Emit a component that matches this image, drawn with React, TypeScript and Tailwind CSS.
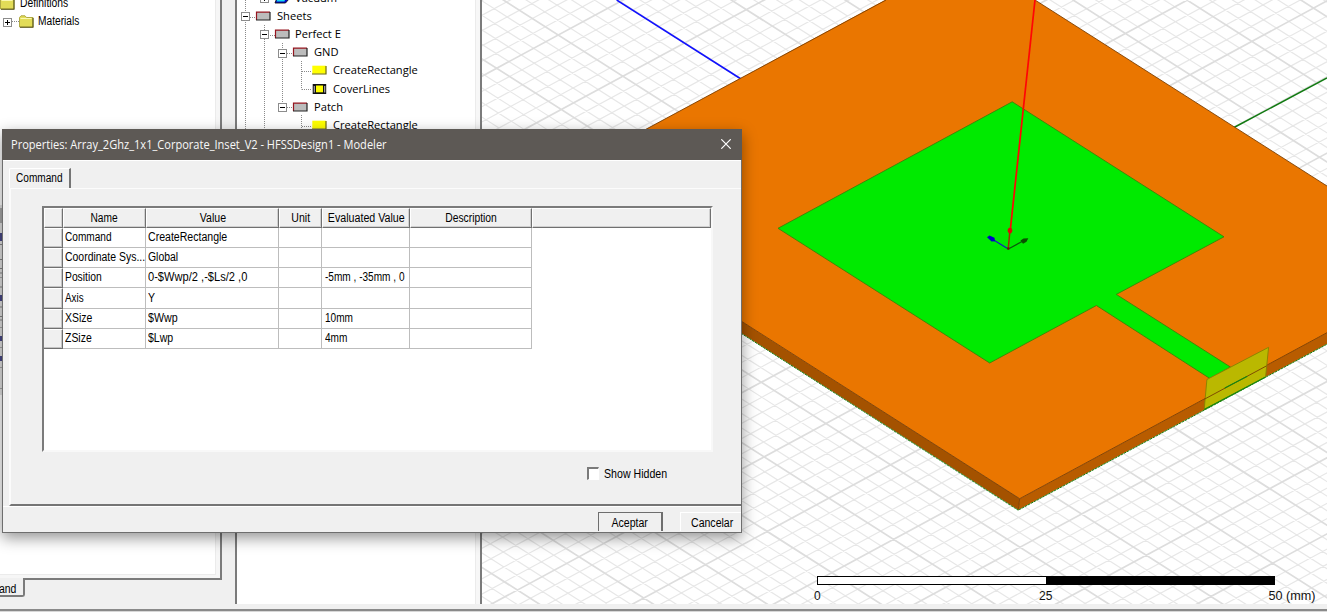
import React from "react";

const U = [64.67, 41.24];
const V = [61.7, -33.3];
const ORIGIN = [558.3, 35];

function gridLine(k: number, dir: number[], step: number[]) {
  const x = ORIGIN[0] + (step[0] * k) / 5;
  const y = ORIGIN[1] + (step[1] * k) / 5;
  return `M${(x - dir[0] * 30).toFixed(2)} ${(y - dir[1] * 30).toFixed(2)}L${(x + dir[0] * 30).toFixed(2)} ${(y + dir[1] * 30).toFixed(2)}`;
}

const indices = Array.from({ length: 221 }, (_, i) => i - 110);
const paths = (major: boolean) =>
  indices
    .filter((k) => (k % 5 === 0) === major)
    .map((k) => gridLine(k, U, V) + gridLine(k, V, U))
    .join("");

function Viewport() {
  return (
    <svg className="block h-[604px] w-[845px] shrink-0 bg-white" viewBox="482 0 845 604">
      <path d={paths(false)} stroke="#e7e7e7" strokeWidth="1.2" fill="none" />
      <path d={paths(true)} stroke="#dddddd" strokeWidth="1.7" fill="none" />
      <path d="M616.7 0L741 79" stroke="#1010ff" strokeWidth="1.5" />
      <path d="M1327 78L1234 127.5" stroke="#107a10" strokeWidth="1.5" />
      <path d="M885 0L1035 0L1327 186V333L1019.7 498.7L741 321L600 231V154Z" fill="#ea7600" />
      <path d="M741 321L1019.7 498.7L1018.2 510L741 333Z" fill="#a45200" />
      <path d="M1019.7 498.7L1327 332.7V344L1018.2 510Z" fill="#b85c00" />
      <path d="M600 154L886 0M1035 0L1327 186M741 321L1019.7 498.7L1327 332.7M1019.7 498.7L1018.2 510" fill="none" stroke="#7c3e00" strokeWidth="0.9" />
      <path d="M741 333.2L1018.2 510.2L1327 344.2" fill="none" stroke="#128012" strokeWidth="1" strokeDasharray="2.5 0.8" />
      <path
        d="M778 228.3L1012.2 101.8L1224 236.8L1116.3 294.4L1230.4 367L1209.9 378.5L1096.4 305.5L989.7 363Z"
        fill="#00ea00"
        stroke="#3c8208"
        strokeWidth="0.9"
      />
      <path d="M1206.9 379.5L1268.6 347.3L1265.6 376.9L1204.2 409.5Z" fill="#bab800" stroke="#858200" strokeWidth="0.9" />
      <path d="M1204.2 399.3L1266.5 365.9" stroke="#804c00" strokeWidth="1" />
      <path d="M1224.8 388.1L1247.3 376.2M1204.2 409.5L1265.6 376.9" stroke="#128a12" strokeWidth="1.1" />
      <path d="M1035 0L1010.2 231" stroke="#ff0505" strokeWidth="1.7" />
      <path d="M1010 230L1008.3 248" stroke="#a03000" strokeWidth="1.5" />
      <path d="M1008.3 249L992 239" stroke="#1020c0" strokeWidth="1.3" />
      <path d="M1008.3 249L1023 241" stroke="#0a5a0a" strokeWidth="1.3" />
      <path d="M987 237.3L989.5 235.6L994.5 237.8L995 241.3L991.5 241.5Z" fill="#0000c8" />
      <path d="M1028.3 238.3L1026.5 241.8L1023 243.8L1020.5 240.5L1023.5 238.6Z" fill="#0a5000" />
      <ellipse cx="1010" cy="230.6" rx="2.3" ry="2.8" fill="#e00808" />
      <circle cx="1008.3" cy="248.6" r="1.3" fill="#701800" />
      <rect x="817.5" y="576.5" width="457" height="8" fill="#fff" stroke="#000" />
      <rect x="1046" y="576" width="229" height="9" fill="#000" />
      <g fontFamily="'Liberation Sans', Arial, sans-serif" fontSize="12" fill="#111">
        <text x="814" y="600">0</text>
        <text x="1039" y="600">25</text>
        <text x="1268.5" y="600" textLength="47" lengthAdjust="spacingAndGlyphs">50 (mm)</text>
      </g>
    </svg>
  );
}

function Expander({ plus = false }: { plus?: boolean }) {
  return (
    <svg className="h-[9px] w-[9px] shrink-0" viewBox="0 0 9 9">
      <rect x="0.5" y="0.5" width="8" height="8" fill="#fff" stroke="#8c8c8c" />
      <path d={plus ? "M2 4.5H7M4.5 2V7" : "M2 4.5H7"} stroke="#000" />
    </svg>
  );
}

function NodeIcon({ kind }: { kind: string }) {
  return (
    <svg className="h-[10px] w-[15px] shrink-0 overflow-visible" viewBox="0 0 15 10">
      {kind === "sheet" && (
        <>
          <rect x="0.5" y="1" width="13.5" height="8" fill="#bcbcbc" />
          <path d="M0.5 9V1.2H14" fill="none" stroke="#96141e" strokeWidth="1.2" />
          <path d="M14 1V9H0" fill="none" stroke="#222" strokeWidth="1.2" />
        </>
      )}
      {kind === "rect" && (
        <>
          <rect x="0.3" y="0.7" width="13.5" height="8" fill="#ffff00" />
          <path d="M14 1V9H0" fill="none" stroke="#6e6a00" strokeWidth="1.2" />
        </>
      )}
      {kind === "cover" && (
        <>
          <rect x="0.7" y="0" width="13.5" height="10" fill="#111" />
          <path d="M2.3 2V8.5M12.7 2V8.5" stroke="#aaa" strokeWidth="1.2" />
          <rect x="4" y="1.5" width="7" height="6.8" fill="#ffff00" />
        </>
      )}
      {kind === "solid" && (
        <>
          <path d="M0 10L4 0H14V6L10.5 10Z" fill="#0000c8" stroke="#111" strokeWidth="0.9" />
          <path d="M1.5 8.6L4.5 0H12L9.5 8.6Z" fill="#18d8f4" />
        </>
      )}
    </svg>
  );
}

function TreeRow({ pad, kind, label, leaf = false, plus = false }: { pad: string; kind: string; label: string; leaf?: boolean; plus?: boolean }) {
  return (
    <div className={`flex h-[18.2px] items-center ${pad}`}>
      {leaf ? <span className="w-[9px] shrink-0" /> : <span className="mt-[2px] flex"><Expander plus={plus} /></span>}
      <span className="ml-[6px] flex"><NodeIcon kind={kind} /></span>
      <span className="ml-[5.5px] origin-left scale-x-[0.96] whitespace-nowrap">{label}</span>
    </div>
  );
}

function ModelTree() {
  return (
    <div className="relative h-[604px] w-[238px] overflow-hidden bg-white">
      <svg className="absolute left-0 top-0 h-[130px] w-[120px]" viewBox="237 0 120 130">
        <path
          d="M245.5 0V130M264.5 25V130M282.5 43V107M301.5 61V89.5M301.5 115V130M264.5 0V2M250 17.5H256M268 35.5H275M287 53.5H293M302 71.5H312M302 89.5H312M287 107.5H293M302 126.5H312"
          fill="none"
          stroke="#8a8a8a"
          strokeDasharray="1 1"
        />
      </svg>
      <div className="relative mt-[-11.5px] font-['Open_Sans','Noto_Sans',sans-serif] text-[11.6px] leading-[18px] text-black">
        <TreeRow pad="pl-[22.7px]" kind="solid" label="Vacuum" plus />
        <TreeRow pad="pl-[4px]" kind="sheet" label="Sheets" />
        <TreeRow pad="pl-[22.7px]" kind="sheet" label="Perfect E" />
        <TreeRow pad="pl-[41.4px]" kind="sheet" label="GND" />
        <TreeRow pad="pl-[60px]" kind="rect" label="CreateRectangle" leaf />
        <TreeRow pad="pl-[60px]" kind="cover" label="CoverLines" leaf />
        <TreeRow pad="pl-[41.4px]" kind="sheet" label="Patch" />
        <TreeRow pad="pl-[60px]" kind="rect" label="CreateRectangle" leaf />
      </div>
    </div>
  );
}

function Folder() {
  return (
    <svg className="h-[13px] w-[15px] shrink-0" viewBox="0 0 15 13">
      <path d="M0.5 2.5L2 0.8H6L7.5 2.5H14V12H0.5Z" fill="#e2dc58" stroke="#a8a238" strokeWidth="0.9" />
      <path d="M1.5 3.5H12.5" stroke="#fbf8b0" />
      <path d="M14 3V12.3H1" fill="none" stroke="#55521c" strokeWidth="1.1" />
    </svg>
  );
}

function ProjectPanel() {
  return (
    <div className="flex h-[609px] w-[235px] shrink-0 flex-col">
      <div className="h-[580px] w-[222px] border-b-2 border-r-2 border-[#7b7b7b] bg-[#f6f6f6] pb-[3px] pr-[4px]">
        <div className="h-full overflow-hidden border-b border-r border-[#ebebeb] bg-white font-['Liberation_Sans',sans-serif] text-[12px] leading-[18px] text-black">
          <div className="mt-[-6px] flex h-[18px] items-center">
            <Folder />
            <span className="ml-[5px] origin-left scale-x-[0.86]">Definitions</span>
          </div>
          <div className="flex h-[18px] items-center pl-[3px]">
            <span className="mt-[2px] flex"><Expander plus /></span>
            <span className="w-[7px] border-b border-dotted border-[#8a8a8a]" />
            <Folder />
            <span className="ml-[4px] origin-left scale-x-[0.85]">Materials</span>
          </div>
        </div>
      </div>
      <div className="mt-[-2px] h-[19px] w-[25px] overflow-hidden rounded-br-[3px] border-b-2 border-r-2 border-[#7b7b7b] bg-[#f0f0f0] font-['Liberation_Sans',sans-serif] text-[12px] leading-[22px] text-black">
        <span className="ml-[-1px] inline-block origin-left scale-x-[0.87]">and</span>
      </div>
    </div>
  );
}

const ROWS = [
  ["Command", "CreateRectangle", ""],
  ["Coordinate Sys...", "Global", ""],
  ["Position", "0-$Wwp/2 ,-$Ls/2 ,0", "-5mm , -35mm , 0"],
  ["Axis", "Y", ""],
  ["XSize", "$Wwp", "10mm"],
  ["ZSize", "$Lwp", "4mm"],
];
const NAME_SCALE = ["scale-x-[0.84]", "scale-x-[0.87]", "scale-x-[0.86]", "scale-x-[0.82]", "scale-x-[0.87]", "scale-x-[0.87]"];
const VALUE_SCALE = ["scale-x-[0.88]", "scale-x-[0.87]", "scale-x-[0.925]", "scale-x-[0.88]", "scale-x-[0.89]", "scale-x-[0.88]"];
const COLS = "grid grid-cols-[19px_83px_133px_43px_88px_122px_179px]";
const HEAD = "flex items-center justify-center border-b border-r border-[#707070] border-l border-l-white border-t border-t-white bg-[#f0f0f0] shadow-[inset_-1px_-1px_0_#d0d0d0]";
const CELL = "flex items-center border-b border-r border-[#bdbdbd] bg-white pb-[1px] pl-[2px]";

function PropertyTable() {
  return (
    <div className="h-[246px] w-[671px] border-b-2 border-l-2 border-r-2 border-t-2 border-b-[#f8f8f8] border-l-[#7b7b7b] border-r-[#f8f8f8] border-t-[#7b7b7b] bg-white">
      <div className={`${COLS} h-[20px]`}>
        <div className={HEAD} />
        <div className={HEAD}><span className="scale-x-[0.85]">Name</span></div>
        <div className={HEAD}><span className="scale-x-[0.88]">Value</span></div>
        <div className={HEAD}><span className="scale-x-[0.88]">Unit</span></div>
        <div className={HEAD}><span className="scale-x-[0.89] whitespace-nowrap">Evaluated Value</span></div>
        <div className={HEAD}><span className="scale-x-[0.86]">Description</span></div>
        <div className={HEAD} />
      </div>
      {ROWS.map((r, i) => (
        <div key={r[0]} className={`${COLS} h-[20.17px]`}>
          <div className="border-b border-r border-[#707070] border-t border-t-white bg-[#f0f0f0] shadow-[inset_-1px_-1px_0_#c4c4c4]" />
          <div className={CELL}><span className={`origin-left whitespace-nowrap ${NAME_SCALE[i]}`}>{r[0]}</span></div>
          <div className={CELL}><span className={`origin-left whitespace-nowrap ${VALUE_SCALE[i]}`}>{r[1]}</span></div>
          <div className={CELL} />
          <div className={CELL}><span className="ml-px origin-left scale-x-[0.84] whitespace-nowrap">{r[2]}</span></div>
          <div className={CELL} />
        </div>
      ))}
    </div>
  );
}

function PropertiesDialog() {
  return (
    <div className="absolute left-[2px] top-[129px] flex h-[404px] w-[740px] flex-col border border-[#6e6e6e] bg-[#f0f0f0] font-['Liberation_Sans',sans-serif] text-[12px] text-black shadow-[0_5px_14px_rgba(0,0,0,0.42)]">
      <div className="-mx-px -mt-px flex h-[31px] shrink-0 items-center justify-between bg-[#5d5955] pl-[9px] pr-[11px] text-[#f8f8f8]">
        <span className="origin-left scale-x-[0.946] whitespace-nowrap font-['Open_Sans','Noto_Sans',sans-serif] text-[11.7px]">Properties: Array_2Ghz_1x1_Corporate_Inset_V2 - HFSSDesign1 - Modeler</span>
        <svg className="mb-[1px] h-[10px] w-[10px]" viewBox="0 0 10 10">
          <path d="M0.3 0.3L9.7 9.7M9.7 0.3L0.3 9.7" stroke="#fff" strokeWidth="1.2" />
        </svg>
      </div>
      <div className="h-[8px] shrink-0 border-t border-white" />
      <div className="ml-[6px] flex h-[20px] w-[62px] shrink-0 items-center rounded-tl-[2px] border-l border-r-2 border-t border-l-white border-r-[#757575] border-t-white pb-[2px] pl-[6px]">
        <span className="origin-left scale-x-[0.84]">Command</span>
      </div>
      <div className="ml-[6px] flex h-[318px] shrink-0 flex-col border-b-2 border-l-2 border-t border-b-[#757575] border-l-[#fbfbfb] border-t-[#fcfcfc] pl-[31px] pt-[17px]">
        <PropertyTable />
        <div className="ml-[545px] mt-[12px] flex items-center">
          <span className="h-[13px] w-[12px] border-l-2 border-t-2 border-b border-r border-b-white border-l-[#7a7a7a] border-r-white border-t-[#7a7a7a] bg-white" />
          <span className="ml-[5px] origin-left scale-x-[0.885] pt-px">Show Hidden</span>
        </div>
      </div>
      <div className="flex h-[25px] shrink-0 overflow-hidden border-t border-white pl-[595px] pt-[5px]">
        <div className="flex h-[24px] w-[65px] items-center justify-center border-l border-r-2 border-t border-l-[#6e6e6e] border-r-[#6e6e6e] border-t-[#6e6e6e] pb-[3px]">
          <span className="scale-x-[0.88]">Aceptar</span>
        </div>
        <div className="ml-[17px] flex h-[24px] w-[61px] items-center border-l border-t border-white pb-[3px] pl-[10px]">
          <span className="origin-left scale-x-[0.88]">Cancelar</span>
        </div>
      </div>
    </div>
  );
}

function EdgeMarks() {
  return (
    <svg className="absolute left-0 top-[200px] h-[200px] w-[2px]" viewBox="0 200 2 200">
      <rect x="0" y="205" width="2" height="190" fill="#e4e4e4" />
      <path d="M1 208V223" stroke="#aaaaaa" strokeWidth="2" />
      <path d="M1 233V241M1 295V301M1 336V341M1 356V361" stroke="#4a4a88" strokeWidth="2" />
      <path d="M0 244.5H2M0 259.5H2M0 268.5H2M0 273H2M0 287H2M0 307H2M0 316.5H2M0 320H2" stroke="#888" />
      <path d="M0 277.5H2M0 327.5H2M0 347.5H2M0 367.5H2M0 388.5H2" stroke="#aaa" />
    </svg>
  );
}

export default function App() {
  return (
    <div className="relative h-[612px] w-[1327px] overflow-hidden bg-[#f0f0f0]">
      <div className="flex h-[609px] items-start">
        <ProjectPanel />
        <div className="flex h-[604px] w-[247px] shrink-0 border-l-2 border-r-2 border-[#7b7b7b]">
          <ModelTree />
          <div className="grow border-l border-[#ebebeb] bg-[#f7f7f7]" />
        </div>
        <Viewport />
      </div>
      <div className="h-[3px] border-t-2 border-[#8a8a8a] bg-[#d8d8d8]" />
      <EdgeMarks />
      <PropertiesDialog />
    </div>
  );
}
